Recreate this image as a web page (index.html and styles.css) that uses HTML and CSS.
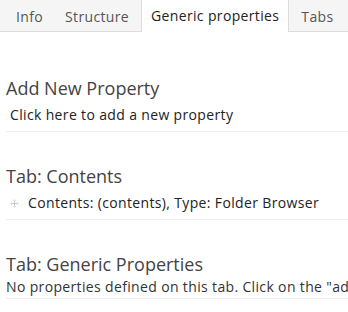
FILE: index.html
```html
<!DOCTYPE html>
<html>
<head>
<meta charset="utf-8">
<link rel="stylesheet" href="styles.css">
</head>
<body>
<div class="tabs">
  <div class="tab">Info</div>
  <div class="tab">Structure</div>
  <div class="tab active">Generic properties</div>
  <div class="tab">Tabs</div>
</div>
<div class="content">
  <div class="section">
    <h3 class="heading">Add New Property</h3>
    <div class="row">Click here to add a new property</div>
  </div>
  <div class="section">
    <h3 class="heading">Tab: Contents</h3>
    <div class="row"><span class="move"><svg width="9" height="9" viewBox="0 0 9 9"><path d="M4.5 0.5v8M0.5 4.5h8" stroke="#c8c8c8" stroke-width="1"/><path d="M3 1.5h3M3 7.5h3M1.5 3v3M7.5 3v3" stroke="#e0e0e0" stroke-width="1"/></svg></span>Contents: (contents), Type: Folder Browser</div>
  </div>
  <div class="section">
    <h3 class="heading">Tab: Generic Properties</h3>
    <div class="row empty"><span class="clip">No properties defined on this tab. Click on the "add a new property" link at the top to create a new property.</span></div>
  </div>
</div>
</body>
</html>
```

FILE: styles.css
```css
html, body {
  margin: 0;
  padding: 0;
  background: #fff;
  font-family: "Open Sans", "DejaVu Sans", sans-serif;
  overflow: hidden;
}
.tabs {
  display: flex;
  height: 31px;
  background: #f5f5f5;
  border-bottom: 1px solid #dcdcdc;
  padding-left: 6px;
  font-size: 14px;
  line-height: 31px;
  letter-spacing: 0.35px;
}
.tab {
  padding: 0 9px;
  border: 1px solid transparent;
  border-bottom: none;
  margin-right: 2px;
  color: #555;
  white-space: nowrap;
}
.tab.active {
  background: #fff;
  border-color: #dcdcdc;
  height: 32px;
  color: #222;
  margin-top: -1px;
}
.content {
  padding-left: 6px;
  padding-top: 12px;
}
.section {
  margin-top: 32px;
}
.heading {
  margin: 0;
  font-size: 18px;
  line-height: 24px;
  font-weight: 400;
  color: #444;
  white-space: nowrap;
}
.row {
  padding: 5px 4px 6px;
  font-size: 14px;
  line-height: 20px;
  letter-spacing: 0.35px;
  color: #222;
  border-bottom: 1px solid #eee;
  white-space: nowrap;
  display: flex;
  align-items: center;
}
.row.empty {
  padding: 1px 0 1px;
  color: #333;
  overflow: hidden;
}
.clip {
  overflow: hidden;
}
.move {
  display: inline-flex;
  width: 18px;
  align-items: center;
}
```
